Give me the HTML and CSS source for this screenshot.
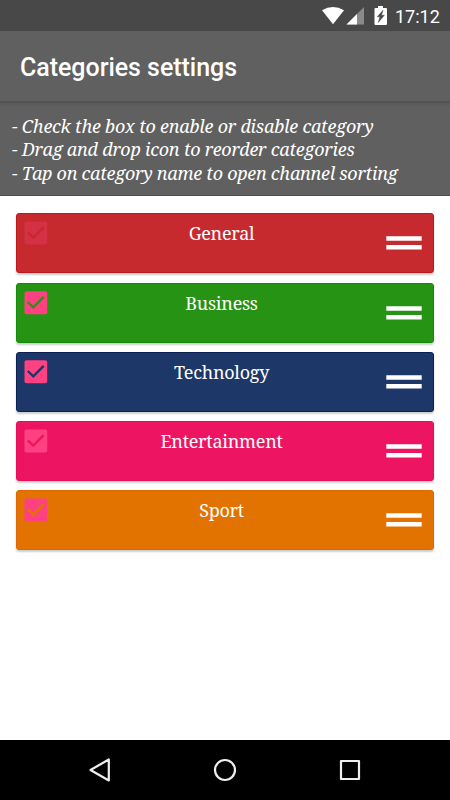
FILE: index.html
```html
<!DOCTYPE html>
<html lang="en">
<head>
<meta charset="utf-8">
<title>Categories settings</title>
<link rel="stylesheet" href="styles.css">
</head>
<body>
<div class="screen">
  <div class="status">
    <svg class="status-icons" width="66" height="20" viewBox="322 5 66 20">
      <path d="M322 10.300Q333 3.700 344 10.300L333 24.300Z" fill="#fff"/>
      <path d="M364 7V24.500H346.500Z" fill="#8a8a8a"/>
      <path d="M357 14V24.500H346.500Z" fill="#fff"/>
      <path d="M375.500 8H378V6h5v2h3q1 0 1 1v15q0 1-1 1H375.500q-1 0-1-1V9q0-1 1-1Z" fill="#fff"/>
      <path d="M383 10.300L377.300 16.800H380L378.300 22.500L384.300 15.300H381.500Z" fill="#484848" stroke="#484848" stroke-width=".5"/>
    </svg>
    <span class="clock">17:12</span>
  </div>
  <header class="appbar"><h1>Categories settings</h1></header>
  <div class="hints">
    <p>- Check the box to enable or disable category</p>
    <p>- Drag and drop icon to reorder categories</p>
    <p class="long">- Tap on category name to open channel sorting</p>
  </div>
  <main class="list">
    <div class="card general"><svg class="check" viewBox="0 0 24 24"><rect x=".5" y=".5" width="22.700" height="23" rx="2"/><path d="M3.800 11.300L9.300 16.600L19.700 6.100"/></svg><span class="name">General</span><svg class="drag" viewBox="0 0 36 14"><path d="M.3 .3H35.700V4.800H.3ZM.3 9H35.700V13.500H.3Z"/></svg></div>
    <div class="card business"><svg class="check" viewBox="0 0 24 24"><rect x=".5" y=".3" width="22.700" height="23" rx="2"/><path d="M3.800 11L9.300 16.300L19.700 5.800"/></svg><span class="name">Business</span><svg class="drag" viewBox="0 0 36 14"><path d="M.3 .3H35.700V4.800H.3ZM.3 9H35.700V13.500H.3Z"/></svg></div>
    <div class="card technology"><svg class="check" viewBox="0 0 24 24"><rect x=".5" y=".3" width="22.700" height="23" rx="2"/><path d="M3.800 11L9.300 16.300L19.700 5.800"/></svg><span class="name">Technology</span><svg class="drag" viewBox="0 0 36 14"><path d="M.3 .3H35.700V4.800H.3ZM.3 9H35.700V13.500H.3Z"/></svg></div>
    <div class="card entertainment"><svg class="check" viewBox="0 0 24 24"><rect x=".5" y=".5" width="22.700" height="23" rx="2"/><path d="M3.800 11.300L9.300 16.600L19.700 6.100"/></svg><span class="name">Entertainment</span><svg class="drag" viewBox="0 0 36 14"><path d="M.3 .3H35.700V4.800H.3ZM.3 9H35.700V13.500H.3Z"/></svg></div>
    <div class="card sport"><svg class="check" viewBox="0 0 24 24"><rect x=".5" y=".5" width="22.700" height="23" rx="2"/><path d="M3.800 11.300L9.300 16.600L19.700 6.100"/></svg><span class="name">Sport</span><svg class="drag" viewBox="0 0 36 14"><path d="M.3 .3H35.700V4.800H.3ZM.3 9H35.700V13.500H.3Z"/></svg></div>
  </main>
  <nav class="navbar">
    <svg viewBox="0 0 24 24"><path d="M20.800 1.500V22.500L2.500 12Z"/></svg>
    <svg viewBox="0 0 24 24"><circle cx="12" cy="12" r="10"/></svg>
    <svg viewBox="0 0 24 24"><rect x="3" y="3" width="18" height="18"/></svg>
  </nav>
</div>
</body>
</html>
```
FILE: styles.css
```css
* { box-sizing: border-box; }
body { margin: 0; background: #fff; }
.screen {
  width: 450px;
  height: 800px;
  display: flex;
  flex-direction: column;
  overflow: hidden;
}
.status {
  height: 31px;
  flex: none;
  background: #484848;
  display: flex;
  align-items: flex-start;
  justify-content: flex-end;
  gap: 7px;
  padding: 5px 10px 0 0;
  color: #fff;
}
.status-icons { display: block; }
.clock { font: 400 18px/23px Roboto, sans-serif; width: 45px; white-space: nowrap; }
.appbar {
  height: 70px;
  flex: none;
  background: #606060;
  padding: 0 20px;
  color: #fff;
}
.appbar h1 { margin: 0; font: 500 25px/73px Roboto, sans-serif; letter-spacing: -0.040px; white-space: nowrap; }
.hints {
  height: 95px;
  flex: none;
  background: linear-gradient(#505050, #5b5b5b 3px, #606060 6px);
  border-bottom: 1px solid #504c4d;
  padding: 14px 12px 0;
  color: #fff;
  font: italic 18px/23.300px "Noto Serif", "Droid Serif", "DejaVu Serif Condensed", "DejaVu Serif", serif;
  letter-spacing: -0.230px;
}
.hints p { margin: 0; white-space: nowrap; }
.hints .long { letter-spacing: -0.270px; }
.list {
  flex: 1;
  padding: 17.400px 16px 0;
  display: flex;
  flex-direction: column;
  gap: 9.150px;
}
.card {
  height: 60px;
  flex: none;
  display: grid;
  grid-template-columns: 24px 1fr 36px;
  border-radius: 3px;
  background: var(--fill);
  border: 1px solid var(--edge);
  padding: 7px 11px 0 7px;
  box-shadow: 0 2px 2px #0003;
}
.check { width: 24px; height: 24px; }
.check rect { fill: var(--box, #ff4081); }
.check path { fill: none; stroke: var(--fill); stroke-width: 2.400; }
.name {
  text-align: center;
  color: #fff;
  font: 18px/25px "Noto Serif", "Droid Serif", "DejaVu Serif Condensed", "DejaVu Serif", serif;
  letter-spacing: -0.270px;
  padding-left: 9px;
}
.drag {
  width: 36px;
  height: 14px;
  margin-top: 15px;
  fill: #fff;
}
.general { --fill: #c62a2f; --edge: #bd171b; --box: #d43147; }
.business { --fill: #279315; --edge: #118c08; }
.technology { --fill: #1c3768; --edge: #0b2054; }
.entertainment { --fill: #ed1562; --edge: #e60f57; }
.sport { --fill: #e27300; --edge: #df6900; }
.navbar {
  height: 60px;
  flex: none;
  background: #000;
  display: flex;
  align-items: center;
  justify-content: center;
  gap: 101px;
}
.navbar svg { width: 24px; height: 24px; fill: none; stroke: #eee; stroke-width: 2.200; stroke-linejoin: round; }
```
